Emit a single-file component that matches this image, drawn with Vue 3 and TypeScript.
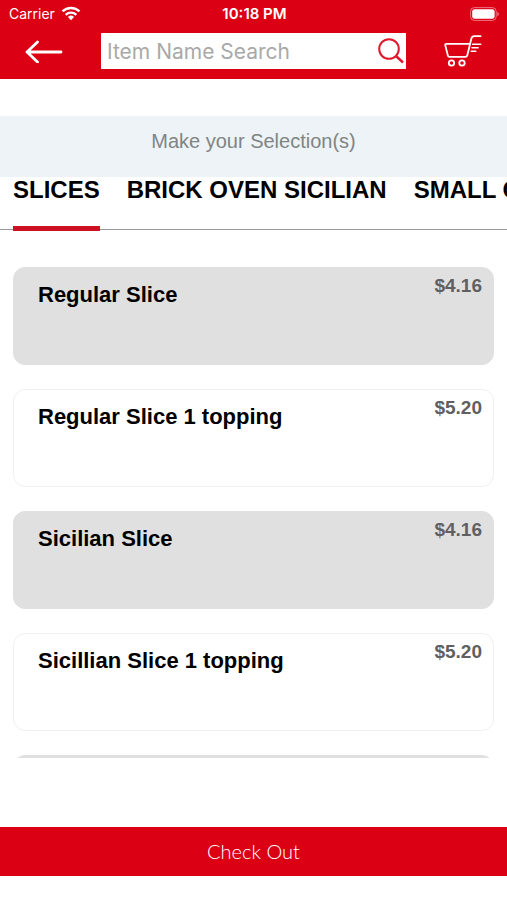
<script setup lang="ts">
import { ref } from 'vue'

interface MenuItem {
  name: string
  price: string
}

const tabs: string[] = ['SLICES', 'BRICK OVEN SICILIAN', 'SMALL C']
const activeTab = ref(0)
const query = ref('')

const items: MenuItem[] = [
  { name: 'Regular Slice', price: '$4.16' },
  { name: 'Regular Slice 1 topping', price: '$5.20' },
  { name: 'Sicilian Slice', price: '$4.16' },
  { name: 'Sicillian Slice 1 topping', price: '$5.20' },
]
</script>

<template>
  <div class="screen">
    <header class="top">
      <div class="status">
        <div class="carrier">
          <span>Carrier</span>
          <svg width="20" height="15" viewBox="0 0 20 15" aria-hidden="true">
            <g fill="none" stroke="#fff" stroke-width="2.4">
              <path d="M1.5 5.4a12.2 12.2 0 0 1 17 0" />
              <path d="M4.7 8.8a7.6 7.6 0 0 1 10.6 0" />
            </g>
            <path d="M10 14.2 6.9 11a4.5 4.5 0 0 1 6.2 0z" fill="#fff" />
          </svg>
        </div>
        <span class="time">10:18 PM</span>
        <div class="battery">
          <svg width="30" height="14" viewBox="0 0 30 14" aria-hidden="true">
            <rect x="0.6" y="0.6" width="25.6" height="12.8" rx="3.8" fill="none" stroke="#fff" stroke-opacity="0.45" />
            <rect x="2.2" y="2.2" width="22.4" height="9.6" rx="2.4" fill="#fff" />
            <path d="M27.4 4.8c2 .9 2 3.5 0 4.4z" fill="#fff" fill-opacity="0.5" />
          </svg>
        </div>
      </div>
      <div class="bar">
        <button class="icon-button" type="button" aria-label="Back">
          <svg width="38" height="24" viewBox="0 0 38 24" fill="none" stroke="#fff" stroke-width="2.8" stroke-linecap="round" stroke-linejoin="round">
            <path d="M36 13H2M12.5 3 2 13l10.500 10" />
          </svg>
        </button>
        <form class="search" role="search" @submit.prevent>
          <input v-model="query" type="text" placeholder="Item Name Search" aria-label="Item Name Search" />
          <button class="find" type="submit" aria-label="Search">
            <svg width="26" height="26" viewBox="0 0 26 26" fill="none" stroke="#e0182b" stroke-width="2">
              <circle cx="11" cy="11" r="9.8" />
              <path d="m18 18 7 6.500" stroke-width="2.4" />
            </svg>
          </button>
        </form>
        <button class="icon-button" type="button" aria-label="Cart">
          <svg width="40" height="34" viewBox="0 0 40 34" fill="none" stroke="#fff" stroke-width="1.8" stroke-linecap="round" stroke-linejoin="round">
            <path d="M37.500 2.200h-6.200q-2.300 0-2.900 2.300L24.300 21.200q-.4 1.700-2 1.700H6.600q-1.500 0-1.800-1.500L2.300 11.300q-.3-1.500 1.200-1.500H26.500" />
            <path d="M29.500 10.200h8.200M29 13.700h6.200M28.200 17.200h4.600" stroke-width="1.5" />
            <circle cx="8.500" cy="29" r="2.7" />
            <circle cx="19" cy="29" r="2.7" />
          </svg>
        </button>
      </div>
    </header>

    <main class="content">
      <p class="prompt">Make your Selection(s)</p>
      <nav class="tabs" aria-label="Menu categories">
        <button
          v-for="(tab, i) in tabs"
          :key="tab"
          type="button"
          class="tab"
          :class="{ active: i === activeTab }"
          @click="activeTab = i"
        >
          {{ tab }}
        </button>
      </nav>
      <div class="viewport">
        <ul class="list">
          <li v-for="item in items" :key="item.name" class="card">
            <h2>{{ item.name }}</h2>
            <span class="price">{{ item.price }}</span>
          </li>
          <li class="card" aria-hidden="true"></li>
        </ul>
      </div>
    </main>

    <footer class="bottom">
      <button class="checkout" type="button">Check Out</button>
    </footer>
  </div>
</template>

<style>
body {
  margin: 0;
  background: #fff;
}
</style>

<style scoped>
.screen {
  display: flex;
  flex-direction: column;
  height: 100vh;
  overflow: hidden;
  font-family: 'Liberation Sans', Arial, sans-serif;
  color: #000;
}

button {
  margin: 0;
  padding: 0;
  border: 0;
  background: none;
  color: inherit;
  font: inherit;
  cursor: pointer;
}

svg {
  display: block;
}

.top {
  flex: none;
  padding-bottom: 10px;
  background: #dc0015;
  color: #fff;
  font-family: Inter, Roboto, sans-serif;
}

.status {
  display: grid;
  grid-template-columns: 1fr auto 1fr;
  align-items: center;
  height: 27px;
  padding: 0 7px 0 9px;
  font-size: 14px;
}

.carrier {
  display: flex;
  align-items: center;
  gap: 6px;
}

.time {
  font-size: 15px;
  font-weight: 600;
}

.battery {
  justify-self: end;
}

.bar {
  display: grid;
  grid-template-columns: 88px minmax(0, 1fr) 88px;
  gap: 13px;
  align-items: center;
  padding-top: 6px;
}

.icon-button {
  display: flex;
  justify-content: center;
}

.search {
  display: flex;
  align-items: center;
  height: 36px;
  padding: 0 2px 0 6px;
  background: #fff;
}

.find {
  flex: none;
}

.search input {
  flex: 1;
  min-width: 0;
  height: 100%;
  padding: 0;
  border: 0;
  outline: 0;
  background: none;
  color: #333;
  font-family: Inter, Roboto, sans-serif;
  font-size: 21px;
}

.search input::placeholder {
  color: #a9a9a9;
  opacity: 1;
}

.content {
  display: flex;
  flex: 1;
  flex-direction: column;
  min-height: 0;
  padding-top: 37px;
}

.prompt {
  flex: none;
  height: 61px;
  margin: 0;
  background: #edf3f6;
  color: #808585;
  font-size: 20px;
  line-height: 51px;
  text-align: center;
}

.tabs {
  display: flex;
  flex: none;
  gap: 27px;
  height: 54px;
  padding-left: 13px;
  overflow: hidden;
  background: linear-gradient(#999, #999) 0 52px / 100% 1px no-repeat;
}

.tab {
  flex: none;
  height: 54px;
  padding-bottom: 24px;
  border-bottom: 5px solid transparent;
  font-size: 24px;
  font-weight: 700;
  line-height: 25px;
  white-space: nowrap;
}

.tab.active {
  border-bottom-color: #cf1022;
}

.viewport {
  flex: 1;
  min-height: 0;
  margin-bottom: 69px;
  overflow: hidden;
}

.list {
  display: flex;
  flex-direction: column;
  gap: 24px;
  margin: 0;
  padding: 36px 13px 0;
  list-style: none;
}

.card {
  display: flex;
  flex: none;
  align-items: flex-start;
  justify-content: space-between;
  box-sizing: border-box;
  height: 98px;
  padding: 5px 11px 0 24px;
  border: 1px solid #f0f0f0;
  border-radius: 12px;
  background: #fff;
}

.card:nth-child(odd) {
  border-color: #e0e0e0;
  background: #e0e0e0;
}

.card h2 {
  margin: 0;
  padding-top: 9px;
  font-size: 22px;
  line-height: 26px;
}

.price {
  color: #606060;
  font-size: 19px;
  font-weight: 700;
  line-height: 26px;
}

.bottom {
  flex: none;
  padding-bottom: 24px;
}

.checkout {
  width: 100%;
  height: 49px;
  padding-bottom: 2px;
  background: #dc0015;
  color: #fff;
  font-family: Lato, 'Open Sans', sans-serif;
  font-size: 20px;
  font-weight: 300;
}
</style>
